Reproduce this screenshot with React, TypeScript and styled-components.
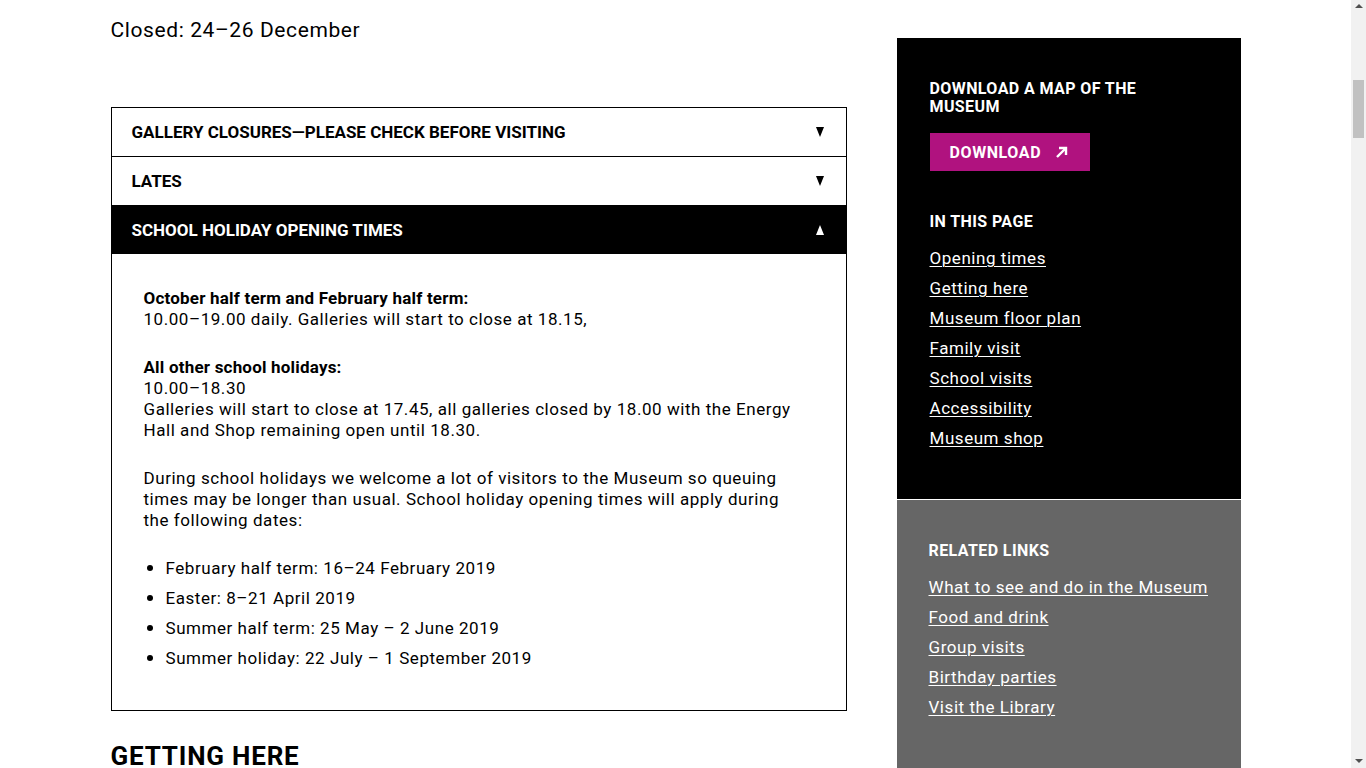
import React from "react";
import styled, { createGlobalStyle } from "styled-components";

const GlobalStyle = createGlobalStyle`
  body {
    margin: 0;
    background: #fff;
    color: #000;
    font-family: Roboto, "Noto Sans", Arial, sans-serif;
    overflow: hidden;
  }
`;

const Viewport = styled.div`
  height: 768px;
  display: flex;
  overflow: hidden;
`;

const Content = styled.div`
  flex: 1;
  min-width: 0;
`;

const Scrollbar = styled.div`
  width: 15px;
  flex: none;
  background: #f1f1f1;
  display: flex;
  flex-direction: column;
  align-items: center;
`;

const ScrollArrow = styled.div<{ $down?: boolean }>`
  width: 0;
  height: 0;
  border-left: 4px solid transparent;
  border-right: 4px solid transparent;
  ${(p) =>
    p.$down
      ? "border-top: 4px solid #505050; margin-top: auto; margin-bottom: 5px;"
      : "border-bottom: 4px solid #505050; margin-top: 4px;"}
`;

const Thumb = styled.div`
  width: 11px;
  height: 58px;
  margin-top: 72px;
  background: #c1c1c1;
`;

const Page = styled.div`
  width: 1130px;
  margin: 0 auto;
  display: grid;
  grid-template-columns: 736px 344px;
  column-gap: 50px;
  align-items: start;
`;

const Main = styled.main`
  padding-top: 18px;
`;

const Closed = styled.p`
  margin: 0;
  font-size: 21px;
  line-height: 24px;
  font-weight: 400;
  letter-spacing: 0.6px;
`;

const Accordion = styled.div`
  margin-top: 65px;
  border: 1px solid #000;
`;

const Header = styled.button<{ $open?: boolean }>`
  display: flex;
  align-items: center;
  justify-content: space-between;
  width: 100%;
  height: 49px;
  padding: 0 22px 0 20px;
  margin: 0;
  border: none;
  border-top: 1px solid #000;
  &:first-child {
    border-top: none;
    height: 48px;
  }
  background: ${(p) => (p.$open ? "#000" : "#fff")};
  color: ${(p) => (p.$open ? "#fff" : "#000")};
  font-family: Roboto, sans-serif;
  font-weight: 700;
  font-size: 17px;
  text-transform: uppercase;
  text-align: left;
  cursor: pointer;
`;

const Caret = ({ up }: { up?: boolean }) => (
  <svg width="8" height="10" viewBox="0 0 8 10" aria-hidden="true">
    <polygon points={up ? "0,10 8,10 4,0" : "0,0 8,0 4,10"} fill="currentColor" />
  </svg>
);

const Panel = styled.div`
  padding: 34px 48px 32px 32px;
  font-size: 17px;
  line-height: 21px;
  letter-spacing: 0.55px;
`;

const Para = styled.p`
  margin: 0 0 27px;
`;

const Strong = styled.strong`
  font-weight: 700;
  letter-spacing: 0.2px;
`;

const List = styled.ul`
  margin: 0;
  padding-left: 22px;
  list-style: none;
`;

const Item = styled.li`
  margin-bottom: 9px;
  &::before {
    content: "";
    display: inline-block;
    width: 6px;
    height: 6px;
    border-radius: 50%;
    background: #000;
    margin-left: -19px;
    margin-right: 13px;
    vertical-align: 3px;
  }
`;

const SectionTitle = styled.h2`
  margin: 32px 0 0;
  font-family: Roboto, sans-serif;
  font-weight: 700;
  font-size: 26px;
  line-height: 26px;
  letter-spacing: 0.8px;
  text-transform: uppercase;
`;

const Aside = styled.aside`
  padding-top: 38px;
  display: flex;
  flex-direction: column;
  gap: 1px;
`;

const Box = styled.section<{ $tone: "black" | "grey" }>`
  background: ${(p) => (p.$tone === "black" ? "#000" : "#666")};
  color: #fff;
  padding: ${(p) => (p.$tone === "black" ? "42px 33px 46px" : "42px 32px 60px")};
`;

const BoxTitle = styled.h3`
  margin: 0;
  font-size: 16px;
  line-height: 18px;
  font-weight: 700;
  letter-spacing: 0.4px;
  text-transform: uppercase;
  width: 230px;
`;

const DownloadButton = styled.a`
  display: inline-flex;
  align-items: center;
  gap: 14px;
  margin: 17px 0 42px;
  height: 38px;
  padding: 0 22px 0 20px;
  background: #b0127f;
  color: #fff;
  font-weight: 700;
  font-size: 16px;
  text-transform: uppercase;
  text-decoration: none;
  letter-spacing: 0.6px;
`;

const Links = styled.ul`
  list-style: none;
  margin: 12px 0 0;
  padding: 0;
`;

const LinkItem = styled.li`
  line-height: 30px;
  font-size: 17px;
  letter-spacing: 0.55px;
`;

const SideLink = styled.a`
  color: #fff;
  text-decoration: underline;
  text-underline-offset: 2px;
  text-decoration-thickness: 1px;
`;

const ArrowIcon = () => (
  <svg width="13" height="13" viewBox="0 0 13 13" aria-hidden="true">
    <path d="M2 11 L10.5 2.5" stroke="#fff" strokeWidth="2.4" fill="none" />
    <path d="M4 2 H11 V9" stroke="#fff" strokeWidth="2.4" fill="none" />
  </svg>
);

const inThisPage = [
  "Opening times",
  "Getting here",
  "Museum floor plan",
  "Family visit",
  "School visits",
  "Accessibility",
  "Museum shop",
];

const related = [
  "What to see and do in the Museum",
  "Food and drink",
  "Group visits",
  "Birthday parties",
  "Visit the Library",
];

export default function App() {
  return (
    <>
      <GlobalStyle />
      <Viewport>
        <Content>
          <Page>
            <Main>
              <Closed>Closed: 24–26 December</Closed>
              <Accordion>
                <Header>
                  <span>Gallery closures—please check before visiting</span>
                  <Caret />
                </Header>
                <Header>
                  <span>Lates</span>
                  <Caret />
                </Header>
                <Header $open>
                  <span>School holiday opening times</span>
                  <Caret up />
                </Header>
                <Panel>
                  <Para>
                    <Strong>October half term and February half term:</Strong>
                    <br />
                    10.00–19.00 daily. Galleries will start to close at 18.15,
                  </Para>
                  <Para>
                    <Strong>All other school holidays:</Strong>
                    <br />
                    10.00–18.30
                    <br />
                    Galleries will start to close at 17.45, all galleries closed by 18.00 with the
                    Energy Hall and Shop remaining open until 18.30.
                  </Para>
                  <Para>
                    During school holidays we welcome a lot of visitors to the Museum so queuing
                    times may be longer than usual. School holiday opening times will apply during
                    the following dates:
                  </Para>
                  <List>
                    <Item>February half term: 16–24 February 2019</Item>
                    <Item>Easter: 8–21 April 2019</Item>
                    <Item>Summer half term: 25 May – 2 June 2019</Item>
                    <Item>Summer holiday: 22 July – 1 September 2019</Item>
                  </List>
                </Panel>
              </Accordion>
              <SectionTitle>Getting here</SectionTitle>
            </Main>
            <Aside>
              <Box $tone="black">
                <BoxTitle>Download a map of the Museum</BoxTitle>
                <DownloadButton href="#">
                  Download <ArrowIcon />
                </DownloadButton>
                <BoxTitle>In this page</BoxTitle>
                <Links>
                  {inThisPage.map((l) => (
                    <LinkItem key={l}>
                      <SideLink href="#">{l}</SideLink>
                    </LinkItem>
                  ))}
                </Links>
              </Box>
              <Box $tone="grey">
                <BoxTitle>Related links</BoxTitle>
                <Links>
                  {related.map((l) => (
                    <LinkItem key={l}>
                      <SideLink href="#">{l}</SideLink>
                    </LinkItem>
                  ))}
                </Links>
              </Box>
            </Aside>
          </Page>
        </Content>
        <Scrollbar aria-hidden="true">
          <ScrollArrow />
          <Thumb />
          <ScrollArrow $down />
        </Scrollbar>
      </Viewport>
    </>
  );
}
